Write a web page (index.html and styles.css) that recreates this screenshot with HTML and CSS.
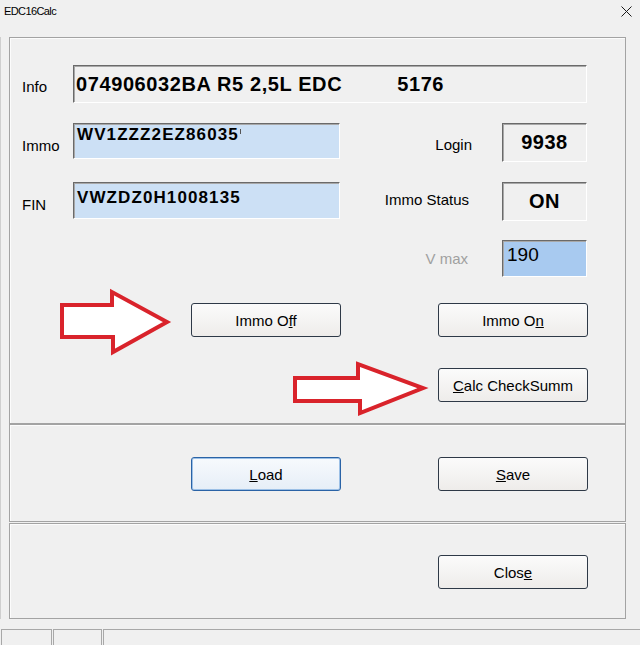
FILE: index.html
```html
<!DOCTYPE html>
<html>
<head>
<meta charset="utf-8">
<title>EDC16Calc</title>
<link rel="stylesheet" href="styles.css">
</head>
<body>
<div class="titlebar">
  <span class="title">EDC16Calc</span>
  <svg class="close-x" width="11" height="11" viewBox="0 0 11 11"><path d="M0.5 0.5 L10.5 10.5 M10.5 0.5 L0.5 10.5" stroke="#1a1a1a" stroke-width="1" fill="none"/></svg>
</div>
<div class="content">
  <section class="panel panel-main">
    <div class="fields">
      <span class="lbl">Info</span>
      <div class="box info">074906032BA R5 2,5L EDC<span class="info-num">5176</span></div>

      <span class="lbl">Immo</span>
      <div class="edit edit-immo">WV1ZZZ2EZ86035<span class="clip-mark"></span></div>
      <span class="rlbl rlbl-login">Login</span>
      <div class="box val">9938</div>

      <span class="lbl">FIN</span>
      <div class="edit edit-fin">VWZDZ0H1008135</div>
      <span class="rlbl rlbl-status">Immo Status</span>
      <div class="box val">ON</div>

      <span class="spacer"></span>
      <span class="spacer"></span>
      <span class="rlbl rlbl-vmax disabled">V max</span>
      <div class="vmax">190</div>
    </div>
    <div class="btn-row">
      <button class="btn">Immo O<u>f</u>f</button>
      <button class="btn">Immo O<u>n</u></button>
    </div>
    <div class="btn-row btn-row-right">
      <button class="btn"><u>C</u>alc CheckSumm</button>
    </div>
  </section>
  <section class="panel panel-file">
    <div class="btn-row btn-row-top">
      <button class="btn btn-focus"><u>L</u>oad</button>
      <button class="btn"><u>S</u>ave</button>
    </div>
  </section>
  <section class="panel panel-close">
    <div class="btn-row btn-row-right btn-row-top">
      <button class="btn">Clos<u>e</u></button>
    </div>
  </section>
</div>
<div class="status">
  <div class="cell cell-a"></div>
  <div class="cell cell-b"></div>
  <div class="cell cell-c"></div>
</div>
<svg class="annot" width="640" height="645" viewBox="0 0 640 645">
  <polygon points="62,305 112,305 112,292 167,322 113,352 113,337 62,337" fill="#ffffff" stroke="#d9232b" stroke-width="4" stroke-linejoin="miter"/>
  <polygon points="295,378 358,378 358,364 423,388 360,413 360,401 295,401" fill="#ffffff" stroke="#d9232b" stroke-width="4" stroke-linejoin="miter"/>
</svg>
</body>
</html>
```
FILE: styles.css
```css
html, body {
  margin: 0;
  padding: 0;
}
body {
  background: #f0f0f0;
  font-family: "Liberation Sans", Arial, sans-serif;
  width: 640px;
  height: 645px;
  overflow: hidden;
  position: relative;
  color: #000;
}
.titlebar {
  height: 37px;
  box-sizing: border-box;
  display: flex;
  justify-content: space-between;
  align-items: flex-start;
  padding: 5px 8px 0 4px;
}
.title {
  font-size: 11px;
  line-height: 13px;
  letter-spacing: -0.6px;
}
.close-x {
  margin-top: 1px;
  display: block;
}
.content {
  border-left: 1px solid #cfcfcf;
  padding-left: 8px;
}
.panel {
  width: 617px;
  box-sizing: border-box;
  border: 1px solid #a3a3a3;
  box-shadow: inset 1px 1px 0 #fcfcfc;
}
.panel-main {
  height: 387px;
  padding-top: 27px;
}
.panel-file {
  height: 98px;
  padding-top: 32px;
}
.panel-close {
  height: 96px;
  margin-top: 1px;
  padding-top: 31px;
}
.fields {
  display: grid;
  grid-template-columns: 63px 267px 162px 85px;
  grid-template-rows: 38px 39px 39px 37px;
  row-gap: 20px;
}
.lbl {
  font-size: 15px;
  padding-left: 12px;
  padding-top: 5px;
  align-self: center;
}
.rlbl {
  font-size: 15px;
  text-align: right;
  padding-right: 33px;
  align-self: center;
}
.rlbl-login {
  padding-right: 30px;
  padding-top: 3px;
}
.rlbl-status {
  padding-bottom: 5px;
}
.rlbl-vmax {
  padding-bottom: 3px;
  padding-right: 34px;
}
.disabled {
  color: #a0a0a0;
}
.box {
  box-sizing: border-box;
  border: 1px solid;
  border-color: #6a6a6a #ffffff #ffffff #6a6a6a;
  box-shadow: inset 1px 1px 0 #a8a8a8;
  background: #f0f0f0;
  display: flex;
  align-items: center;
  font-weight: bold;
}
.info {
  grid-column: 2 / 5;
  height: 38px;
  font-size: 20px;
  letter-spacing: 0.6px;
  padding-left: 2px;
  white-space: nowrap;
}
.info-num {
  margin-left: 55px;
}
.val {
  height: 39px;
  justify-content: center;
  font-size: 20px;
  letter-spacing: 0.5px;
}
.edit {
  box-sizing: border-box;
  border: 1px solid;
  border-color: #6a6a6a #ffffff #ffffff #6a6a6a;
  box-shadow: inset 1px 1px 0 #a8a8a8;
  background: #cce0f5;
  font-weight: bold;
  font-size: 17px;
  letter-spacing: 1.1px;
  padding: 0 3px;
  white-space: nowrap;
  overflow: hidden;
}
.edit-immo {
  height: 36px;
  padding-top: 1px;
}
.edit-fin {
  height: 37px;
  padding-top: 5px;
}
.clip-mark {
  display: inline-block;
  width: 1px;
  height: 5px;
  background: #555;
  vertical-align: top;
  margin-top: 4px;
  margin-left: 1px;
}
.vmax {
  box-sizing: border-box;
  height: 37px;
  margin-top: -1px;
  border: 1px solid;
  border-color: #6a6a6a #ffffff #ffffff #6a6a6a;
  box-shadow: inset 1px 1px 0 #a8a8a8;
  background: #a8caf0;
  font-size: 19px;
  padding: 3px 3px 0 4px;
}
.btn-row {
  display: flex;
  gap: 97px;
  padding-left: 181px;
  margin-top: 25px;
}
.btn-row-right {
  padding-left: 428px;
  margin-top: 31px;
}
.btn-row-top {
  margin-top: 0;
}
.btn {
  width: 150px;
  height: 34px;
  box-sizing: border-box;
  margin: 0;
  padding: 0;
  border: 1px solid #2e3947;
  border-radius: 3px;
  background: linear-gradient(#fbfbfb, #eeecea);
  font-family: "Liberation Sans", Arial, sans-serif;
  font-size: 15px;
  color: #000;
  text-align: center;
}
.btn-focus {
  border-color: #2a63a6;
  box-shadow: inset 0 0 0 1px #9cc0e6;
  background: linear-gradient(#f7fafd, #e6eef7);
}
.status {
  display: flex;
  gap: 1px;
  margin-top: 10px;
  height: 16px;
  padding-left: 1px;
}
.cell {
  box-sizing: border-box;
  height: 16px;
  border: 1px solid #a8a8a8;
  border-bottom: none;
}
.cell-a {
  width: 51px;
}
.cell-b {
  width: 49px;
}
.cell-c {
  flex: 1;
  border-right: none;
}
.annot {
  position: absolute;
  left: 0;
  top: 0;
  pointer-events: none;
}
```
